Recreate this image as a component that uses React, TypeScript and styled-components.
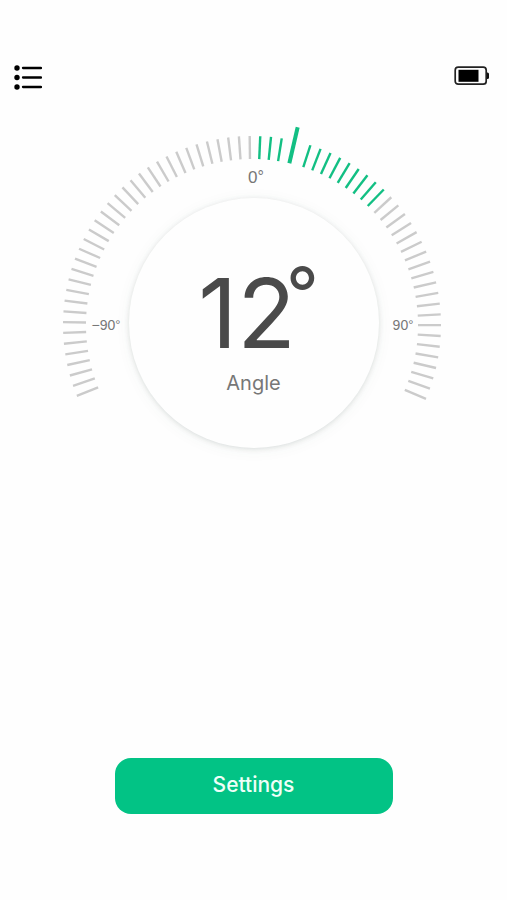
import React from "react";
import styled, { createGlobalStyle } from "styled-components";

const GlobalStyle = createGlobalStyle`
  *, *::before, *::after { box-sizing: border-box; }
  body {
    margin: 0;
    background: #fefefe;
    font-family: Inter, "Liberation Sans", sans-serif;
    color: #4a4a4a;
  }
`;

const Screen = styled.div`
  min-height: 100vh;
  display: flex;
  flex-direction: column;
  align-items: center;
  padding: 64px 0 86px;
`;

const Header = styled.header`
  width: 100%;
  display: flex;
  justify-content: space-between;
  align-items: flex-start;
  padding: 0 17px 0 14px;
`;

const IconButton = styled.button`
  display: flex;
  padding: 0;
  border: 0;
  background: none;
  cursor: pointer;
`;

const Gauge = styled.main`
  display: grid;
  justify-items: center;
  align-items: start;
  width: 384px;
  max-width: 100%;
  margin-top: 30px;
  > * {
    grid-area: 1 / 1;
  }
`;

const Scale = styled.svg`
  width: 100%;
  height: auto;
  display: block;
`;

const ScaleLabel = styled.text`
  fill: #777;
  font-family: "Liberation Sans", sans-serif;
  text-anchor: middle;
`;

const Dial = styled.section`
  width: 250px;
  height: 250px;
  margin-top: 78px;
  border-radius: 50%;
  background: #fefefe;
  box-shadow: 0 1px 5px rgba(60, 80, 75, 0.16), 0 2px 16px rgba(60, 90, 85, 0.05);
  display: flex;
  flex-direction: column;
  align-items: center;
  padding-top: 67px;
`;

const Reading = styled.div`
  display: flex;
  align-items: flex-start;
  margin-left: 10px;
  font-size: 96px;
  font-weight: 400;
  line-height: 96px;
`;

const Degree = styled.span`
  margin-left: -10px;
  font-size: 72px;
  line-height: 56px;
`;

const Caption = styled.div`
  margin-top: 10px;
  font-size: 20px;
  line-height: 24px;
  color: #777;
`;

const SettingsButton = styled.button`
  width: 278px;
  max-width: 90%;
  height: 56px;
  margin-top: auto;
  padding: 0 0 2px;
  border: 0;
  border-radius: 16px;
  background: #02c385;
  color: #effff8;
  font: 500 21px/24px Inter, "Liberation Sans", sans-serif;
  cursor: pointer;
`;

type Tick = { angle: number; active: boolean; pointer?: boolean };

const STEP = 3.275;
const ticks: Tick[] = [
  ...Array.from({ length: 35 }, (_, i) => ({ angle: -0.7 - i * STEP, active: false })),
  ...Array.from({ length: 3 }, (_, i) => ({ angle: 2.5 + i * STEP, active: true })),
  { angle: 13, active: true, pointer: true },
  ...Array.from({ length: 30 }, (_, i) => ({ angle: 18 + i * STEP, active: i < 9 })),
];

const CX = 190;
const CY = 205;

function ScaleTick({ angle, active, pointer }: Tick) {
  return (
    <line
      x1={CX}
      x2={CX}
      y1={CY - (pointer ? 203 : 189)}
      y2={CY - 166}
      stroke={active ? "#12bf83" : "#cbcbcb"}
      strokeWidth={pointer ? 4 : 2.4}
      transform={`rotate(${angle} ${CX} ${CY})`}
    />
  );
}

function Mark({ x, y, size, value }: { x: number; y: number; size: number; value: string }) {
  return (
    <ScaleLabel x={x} y={y} fontSize={size}>
      {value}
      <tspan dy="-1" fontSize={size - 1}>°</tspan>
    </ScaleLabel>
  );
}

export default function App() {
  return (
    <>
      <GlobalStyle />
      <Screen>
        <Header>
          <IconButton aria-label="Menu">
            <svg width="28" height="26" viewBox="0 0 28 26">
              {[4, 13.5, 23].map((y) => (
                <g key={y}>
                  <circle cx="3" cy={y} r="2.7" fill="#000" />
                  <path d={`M9 ${y}H27`} stroke="#000" strokeWidth="2.3" strokeLinecap="round" />
                </g>
              ))}
            </svg>
          </IconButton>
          <svg width="36" height="24" viewBox="0 0 36 24" role="img" aria-label="Battery">
            <rect x="1.2" y="3.2" width="31" height="17" rx="3" fill="none" stroke="#222" strokeWidth="1.7" />
            <rect x="4.5" y="5.8" width="20" height="12" fill="#000" />
            <path d="M33 8.5h.5a1.5 1.5 0 0 1 1.5 1.5v3.5a1.5 1.5 0 0 1-1.5 1.5H33z" fill="#111" />
          </svg>
        </Header>
        <Gauge>
          <Scale viewBox="0 0 384 290">
            {ticks.map((tick) => (
              <ScaleTick key={tick.angle} {...tick} />
            ))}
            <Mark x={194} y={63} size={17} value="0" />
            <Mark x={44} y={210} size={14} value="−90" />
            <Mark x={341} y={210} size={14} value="90" />
          </Scale>
          <Dial>
            <Reading>
              12<Degree>°</Degree>
            </Reading>
            <Caption>Angle</Caption>
          </Dial>
        </Gauge>
        <SettingsButton>Settings</SettingsButton>
      </Screen>
    </>
  );
}
